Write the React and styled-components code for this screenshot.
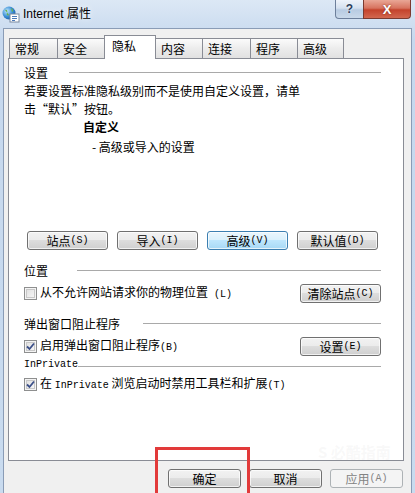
import React from 'react';
import styled, { createGlobalStyle } from 'styled-components';

const GlobalStyle = createGlobalStyle`
body {
  margin: 0;
  background: #c9dbef;
}
* {
  box-sizing: border-box;
}
`;

const cjk = `"Noto Sans CJK SC", "Liberation Mono", monospace`;

const Window = styled.div`
  position: relative;
  width: 415px;
  height: 493px;
  background: linear-gradient(#dce8f5, #c6d8ee 40px, #c9dbef);
  display: flex;
  flex-direction: column;
  overflow: hidden;
  font-family: ${cjk};
  font-size: 12px;
  color: #000;
`;

const TitleBar = styled.div`
  height: 28px;
  display: flex;
  align-items: flex-start;
  padding-left: 2px;
`;

const TitleIcon = styled.svg`
  margin-top: 6px;
  flex-shrink: 0;
`;

const TitleText = styled.div`
  margin-top: 6px;
  margin-left: 3px;
  font-family: "Liberation Sans", "Noto Sans CJK SC", sans-serif;
  font-size: 12px;
  line-height: 16px;
  color: #000;
  text-shadow: 0 0 6px #fff;
  flex: 1;
`;

const CaptionButton = styled.div`
  width: ${(p) => p.w}px;
  height: 19px;
  display: flex;
  align-items: center;
  justify-content: center;
  border: 1px solid ${(p) => (p.close ? '#7b3a30' : '#6d7f9b')};
  border-top: none;
  border-radius: ${(p) => (p.close ? '0 0 4px 0' : '0 0 0 4px')};
  background: ${(p) =>
    p.close
      ? 'linear-gradient(#e9a796, #d7735f 45%, #c4432c 55%, #d2674f)'
      : 'linear-gradient(#eef3fa, #d5e1ef 45%, #b8cbe2 55%, #cad9ea)'};
  color: ${(p) => (p.close ? '#fff' : '#2c3e5c')};
  font-family: "Liberation Sans", sans-serif;
  font-weight: bold;
  font-size: ${(p) => (p.close ? 13 : 12)}px;
  margin-left: ${(p) => (p.close ? -1 : 0)}px;
  text-shadow: ${(p) => (p.close ? '0 0 2px #7a2414' : '0 0 2px #fff')};
`;

const Controls = styled.div`
  display: flex;
  margin-right: 4px;
`;

const Client = styled.div`
  flex: 1;
  margin: 0 3px;
  background: #f0f0f0;
  border: 1px solid #8a9cb6;
  border-bottom: none;
  padding: 6px 7px 0 4px;
  display: flex;
  flex-direction: column;
`;

const TabRow = styled.div`
  display: flex;
  align-items: flex-end;
  height: 24px;
  margin-bottom: -1px;
  padding-left: 1px;
`;

const Tab = styled.div`
  width: ${(p) => p.w}px;
  height: ${(p) => (p.active ? 24 : 21)}px;
  margin-left: -1px;
  border: 1px solid #898c95;
  border-bottom: ${(p) => (p.active ? 'none' : '1px solid #898c95')};
  background: ${(p) => (p.active ? '#fff' : 'linear-gradient(#fbfbfb, #ececec 50%, #e1e1e1)')};
  position: ${(p) => (p.active ? 'relative' : 'static')};
  z-index: ${(p) => (p.active ? 1 : 'auto')};
  padding-left: ${(p) => (p.active ? 7 : 5)}px;
  padding-top: 2px;
  line-height: 16px;
  font-size: 12px;
  &:first-child {
    margin-left: 0;
  }
`;

const Panel = styled.div`
  height: 403px;
  background: #fff;
  border: 1px solid #898c95;
  padding: 7px 22px 0 15px;
  display: flex;
  flex-direction: column;
`;

const GroupHeader = styled.div`
  display: flex;
  align-items: center;
  height: 14px;
  line-height: 14px;
  margin-top: ${(p) => p.top || 0}px;
  white-space: nowrap;
  &::after {
    content: '';
    flex: 1;
    height: 1px;
    margin-left: ${(p) => p.gap}px;
    margin-top: ${(p) => p.lineDrop || 0}px;
    background: #a9a9a9;
    border-bottom: 1px solid #fff;
  }
`;

const Latin = styled.span`
  font-family: "Liberation Mono", monospace;
  font-size: 10px;
`;

const Description = styled.div`
  margin-top: 2px;
  line-height: 18px;
`;

const DescLine = styled.div`
  white-space: nowrap;
`;

const LevelTitle = styled.div`
  margin-top: 2px;
  padding-left: 59px;
  line-height: 14px;
  font-weight: bold;
`;

const LevelNote = styled.div`
  margin-top: 6px;
  padding-left: 68px;
  line-height: 14px;
`;

const ButtonRow = styled.div`
  display: flex;
  gap: 9px;
  margin-top: 77px;
  padding-left: 3px;
`;

const Button = styled.div`
  width: ${(p) => p.w || 81}px;
  height: ${(p) => p.h || 19}px;
  display: flex;
  align-items: center;
  justify-content: center;
  border: 1px solid ${(p) => (p.focus ? '#3c7fb1' : p.disabled ? '#adb2b5' : '#707070')};
  border-radius: 3px;
  background: ${(p) =>
    p.focus
      ? 'linear-gradient(#eaf6fd, #d9f0fc 50%, #bee6fd 50%, #a7d9f5)'
      : p.disabled
      ? '#f4f4f4'
      : 'linear-gradient(#f2f2f2, #ebebeb 50%, #dddddd 50%, #cfcfcf)'};
  box-shadow: inset 0 0 0 1px ${(p) => (p.disabled ? 'transparent' : 'rgba(255,255,255,0.7)')};
  color: ${(p) => (p.disabled ? '#838383' : '#000')};
  line-height: 14px;
  white-space: nowrap;
  flex-shrink: 0;
`;

const OptionRow = styled.div`
  display: flex;
  align-items: center;
  justify-content: space-between;
  height: ${(p) => p.h || 19}px;
  margin-top: ${(p) => p.top}px;
`;

const CheckLabel = styled.label`
  display: flex;
  align-items: center;
  gap: 3px;
  line-height: 14px;
  white-space: nowrap;
`;

const Box = styled.span`
  width: 13px;
  height: 13px;
  border: 1px solid #8e8f8f;
  background: linear-gradient(135deg, #dcdcdc, #fbfbfb);
  box-shadow: inset 0 0 0 1px #f4f4f4, inset 0 0 0 2px #c8c8c8;
  display: flex;
  align-items: center;
  justify-content: center;
`;

const Footer = styled.div`
  display: flex;
  justify-content: flex-end;
  gap: 8px;
  margin-top: 8px;
  padding-right: 1px;
`;

const Highlight = styled.div`
  position: absolute;
  left: 155px;
  top: 447px;
  width: 95px;
  height: 50px;
  border: 3px solid #e23a3a;
`;

const Watermark = styled.div`
  position: absolute;
  left: 318px;
  top: 441px;
  font-family: "Noto Sans CJK SC", sans-serif;
  font-size: 15px;
  font-weight: bold;
  color: rgba(200, 200, 200, 0.12);
`;

const Checkbox = ({ checked, children }) => (
  <CheckLabel>
    <Box>
      {checked && (
        <svg width="9" height="9" viewBox="0 0 9 9">
          <path d="M1 4.5 L3.5 7 L8 1.5" fill="none" stroke="#3b4f88" strokeWidth="1.8" />
        </svg>
      )}
    </Box>
    <span>{children}</span>
  </CheckLabel>
);

const IeIcon = () => (
  <TitleIcon width="18" height="17" viewBox="0 0 18 17">
    <defs>
      <radialGradient id="globe" cx="0.35" cy="0.35" r="0.7">
        <stop offset="0" stopColor="#bfe6ff" />
        <stop offset="0.6" stopColor="#3b8fd6" />
        <stop offset="1" stopColor="#1d5fa8" />
      </radialGradient>
    </defs>
    <circle cx="7" cy="7" r="6.5" fill="url(#globe)" />
    <path d="M3 4 C5 3 6 5 5 7 C4 9 6 10 7 9" fill="#6bb34a" />
    <path d="M9 2 C11 3 12 5 10 6" fill="#6bb34a" />
    <rect x="8" y="8" width="9" height="8" fill="#fff" stroke="#7a8aa0" strokeWidth="1" />
    <path d="M10 10.5 H15 M10 12.5 H15 M10 14.5 H13" stroke="#4a78b8" strokeWidth="1" />
  </TitleIcon>
);

const tabs = [
  { label: '常规', w: 49 },
  { label: '安全', w: 48 },
  { label: '隐私', w: 52, active: true },
  { label: '内容', w: 48 },
  { label: '连接', w: 49 },
  { label: '程序', w: 48 },
  { label: '高级', w: 47 },
];

export default function App() {
  return (
    <>
      <GlobalStyle />
      <Window>
        <TitleBar>
          <IeIcon />
          <TitleText>Internet 属性</TitleText>
          <Controls>
            <CaptionButton w={29}>?</CaptionButton>
            <CaptionButton w={48} close>
              X
            </CaptionButton>
          </Controls>
        </TitleBar>
        <Client>
          <TabRow>
            {tabs.map((t) => (
              <Tab key={t.label} w={t.w} active={t.active}>
                {t.label}
              </Tab>
            ))}
          </TabRow>
          <Panel>
            <GroupHeader gap={21}>设置</GroupHeader>
            <Description>
              <DescLine>若要设置标准隐私级别而不是使用自定义设置，请单</DescLine>
              <DescLine>击“默认”按钮。</DescLine>
            </Description>
            <LevelTitle>自定义</LevelTitle>
            <LevelNote>- 高级或导入的设置</LevelNote>
            <ButtonRow>
              <Button>
                站点<Latin>(S)</Latin>
              </Button>
              <Button>
                导入<Latin>(I)</Latin>
              </Button>
              <Button focus>
                高级<Latin>(V)</Latin>
              </Button>
              <Button>
                默认值<Latin>(D)</Latin>
              </Button>
            </ButtonRow>
            <GroupHeader gap={29} top={14}>
              位置
            </GroupHeader>
            <OptionRow top={6}>
              <Checkbox>
                从不允许网站请求你的物理位置<Latin> (L)</Latin>
              </Checkbox>
              <Button>
                清除站点<Latin> (C)</Latin>
              </Button>
            </OptionRow>
            <GroupHeader gap={23} top={14}>
              弹出窗口阻止程序
            </GroupHeader>
            <OptionRow top={6}>
              <Checkbox checked>
                启用弹出窗口阻止程序<Latin>(B)</Latin>
              </Checkbox>
              <Button>
                设置<Latin>(E)</Latin>
              </Button>
            </OptionRow>
            <GroupHeader gap={0} top={2} lineDrop={3}>
              <Latin>InPrivate</Latin>
            </GroupHeader>
            <OptionRow top={4} h={16}>
              <Checkbox checked>
                在 <Latin>InPrivate</Latin> 浏览启动时禁用工具栏和扩展<Latin>(T)</Latin>
              </Checkbox>
            </OptionRow>
          </Panel>
          <Footer>
            <Button w={73}>确定</Button>
            <Button w={73}>取消</Button>
            <Button w={73} disabled>
              应用<Latin>(A)</Latin>
            </Button>
          </Footer>
        </Client>
        <Watermark>S 必酷指南</Watermark>
        <Highlight />
      </Window>
    </>
  );
}
